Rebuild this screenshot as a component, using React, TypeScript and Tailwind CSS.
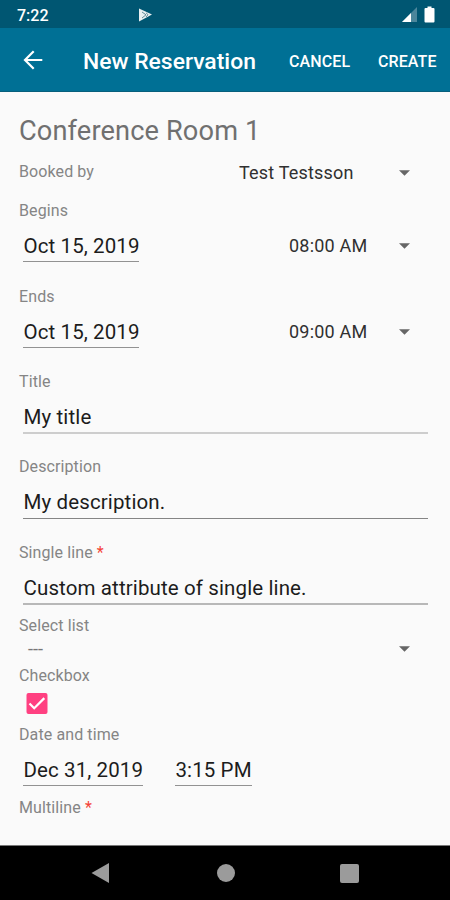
import type { ReactNode } from "react";

function Label({ children, required }: { children: ReactNode; required?: boolean }) {
  return (
    <div className="h-5 whitespace-nowrap text-[16px] leading-[22px] tracking-[0.1px] text-[#858585]">
      {children}
      {required && <span className="text-[#f44336]"> *</span>}
    </div>
  );
}

function Caret() {
  return (
    <svg className="mr-[18px] h-[6px] w-[11px] shrink-0" viewBox="0 0 11 6">
      <path d="M0 0.2H11L5.5 5.8Z" fill="#666" />
    </svg>
  );
}

function TextField({ label, value, required, line }: { label: string; value: string; required?: boolean; line: string }) {
  return (
    <div>
      <Label required={required}>{label}</Label>
      <div className={`ml-[4px] mt-[10px] flex h-[33px] items-start whitespace-nowrap pl-[0.5px] text-[20.5px] leading-[33px] tracking-[0.12px] text-[#1c1c1c] ${line}`}>
        {value}
      </div>
    </div>
  );
}

function DateValue({ children, width }: { children: string; width: string }) {
  return (
    <div className={`h-[31px] whitespace-nowrap border-b border-[#929292] pl-[0.5px] text-[20.5px] leading-[31px] tracking-[0.1px] text-[#1c1c1c] ${width}`}>
      {children}
    </div>
  );
}

function DateTimeRow({ label, date, time }: { label: string; date: string; time: string }) {
  return (
    <div>
      <Label>{label}</Label>
      <div className="ml-[4px] mt-[11px] flex h-[31px] items-start">
        <DateValue width="w-[116px]">{date}</DateValue>
        <div className="ml-auto flex h-[30px] items-center">
          <span className="mr-[31px] w-[79px] whitespace-nowrap text-[18px] leading-[22px] tracking-[0.2px] text-[#303030]">{time}</span>
          <Caret />
        </div>
      </div>
    </div>
  );
}

export default function App() {
  return (
    <div className="flex h-[900px] w-[450px] flex-col overflow-hidden bg-[#fafafa] font-['Roboto',sans-serif]">
      <div className="flex h-7 shrink-0 items-center bg-[#005672] text-white">
        <span className="ml-[17px] mt-[3px] w-[121px] text-[16px] font-medium">7:22</span>
        <svg className="mt-px h-[14px] w-[15px]" viewBox="0 0 15 14">
          <path d="M1 0.5L14 6.5L1 13.5Z" fill="#e9eff1" />
          <path d="M4 4L8 6.8L4 10M8 4.8L10 6.7L8 9" fill="none" stroke="#55808f" strokeWidth="0.9" />
        </svg>
        <svg className="ml-auto h-[15px] w-[15px]" viewBox="0 0 15 15">
          <path d="M0 15L15 0V15Z" fill="#4b869b" />
          <path d="M0 15L9 6V15Z" fill="#fff" />
        </svg>
        <svg className="ml-[7px] mr-[15px] h-[17px] w-[11px]" viewBox="0 0 11 17">
          <path d="M3.5 0.5H7.5V2H9.5Q10.5 2 10.5 3V15.5Q10.5 16.5 9.5 16.5H1.5Q0.5 16.5 0.5 15.5V3Q0.5 2 1.5 2H3.5Z" fill="#fff" />
        </svg>
      </div>

      <header className="flex h-16 shrink-0 items-center border-b border-[#075f7c] bg-[#007095] pt-[2px] text-white">
        <svg className="mb-px ml-[23px] h-5 w-5" viewBox="0 0 20 20" fill="none" stroke="#fff" strokeWidth="2.2">
          <path d="M19.3 10H2M10.7 1.2L2 10L10.7 18.8" />
        </svg>
        <h1 className="ml-[40px] w-[206px] whitespace-nowrap pt-[3px] text-[22.9px] font-medium">New Reservation</h1>
        <span className="w-[89px] pt-[2px] text-[16px] font-medium tracking-[0.1px]">CANCEL</span>
        <span className="pt-[2px] text-[16px] font-medium tracking-[0.1px]">CREATE</span>
      </header>

      <main className="flex h-[754px] shrink-0 flex-col border-b border-[#777] pl-[19px] pr-[22px]">
        <h2 className="mt-[20px] h-9 whitespace-nowrap text-[27.2px] leading-[38px] tracking-[0.13px] text-[#707070]">Conference Room 1</h2>
        <div className="mt-[13px] flex h-6 items-start">
          <Label>Booked by</Label>
          <div className="ml-auto flex h-6 items-center">
            <span className="mr-[45px] w-[115px] whitespace-nowrap text-[18px] leading-6 tracking-[0.2px] text-[#303030]">Test Testsson</span>
            <Caret />
          </div>
        </div>
        <div className="mt-[15px]">
          <DateTimeRow label="Begins" date="Oct 15, 2019" time="08:00 AM" />
        </div>
        <div className="mt-[24px]">
          <DateTimeRow label="Ends" date="Oct 15, 2019" time="09:00 AM" />
        </div>
        <div className="mt-[23px]">
          <TextField label="Title" value="My title" line="border-b-2 border-[#cdcdcd]" />
        </div>
        <div className="mt-[22px]">
          <TextField label="Description" value="My description." line="border-b border-[#858585]" />
        </div>
        <div className="mt-[23px]">
          <TextField required label="Single line" value="Custom attribute of single line." line="border-b-2 border-[#b8b8b8]" />
        </div>
        <div className="mt-[10px]">
          <Label>Select list</Label>
          <div className="ml-[9px] mt-[5px] flex h-[18px] items-center justify-between">
            <span className="text-[18px] leading-[18px] text-[#777]">---</span>
            <Caret />
          </div>
        </div>
        <div className="mt-[7px]">
          <Label>Checkbox</Label>
          <svg className="ml-[7px] mt-[8px] block h-[22px] w-[22px]" viewBox="0 0 22 22">
            <rect x="0.5" y="0" width="21" height="21" rx="2" fill="#ff4081" />
            <path d="M3.5 10.5L8.2 15.2L18.3 5.1" fill="none" stroke="#fff" strokeWidth="2.2" />
          </svg>
        </div>
        <div className="mt-[9px]">
          <Label>Date and time</Label>
          <div className="ml-[4px] mt-[11px] flex gap-8">
            <DateValue width="w-[120px]">Dec 31, 2019</DateValue>
            <DateValue width="w-[77px]">3:15 PM</DateValue>
          </div>
        </div>
        <div className="mt-[11px]">
          <Label required>Multiline</Label>
        </div>
      </main>

      <nav className="flex min-h-0 flex-1 items-center bg-black">
        <svg className="ml-[91px] h-5 w-[18px]" viewBox="0 0 18 20">
          <path d="M0.5 10L18 0V20Z" fill="#9b9b9b" />
        </svg>
        <div className="ml-[108px] h-[17.5px] w-[17.5px] rounded-full bg-[#9b9b9b]" />
        <div className="ml-[105.5px] h-[19px] w-[19px] rounded-[2px] bg-[#9b9b9b]" />
      </nav>
    </div>
  );
}
